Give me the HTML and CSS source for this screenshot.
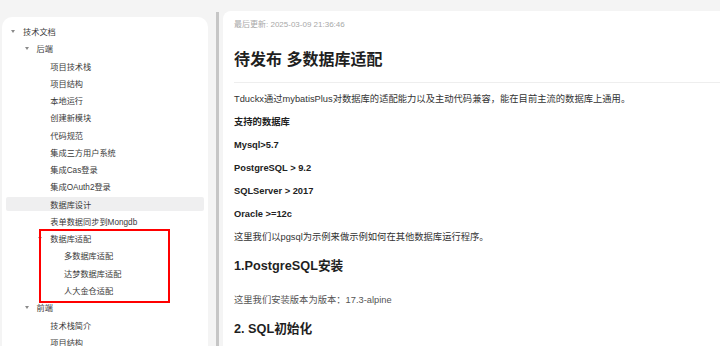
FILE: index.html
```html
<!DOCTYPE html>
<html lang="zh-CN">
<head>
    <meta charset="UTF-8">
    <meta name="viewport" content="width=device-width, initial-scale=1.0">
    <title>待发布 多数据库适配 - 技术文档</title>
    <link rel="stylesheet" href="styles.css">
</head>
<body>
    <aside class="sidebar">
        <ul class="tree">
            <li class="node depth-0"><span class="caret"></span>技术文档</li>
            <li class="node depth-1"><span class="caret"></span>后端</li>
            <li class="node depth-2"><span class="spacer"></span>项目技术栈</li>
            <li class="node depth-2"><span class="spacer"></span>项目结构</li>
            <li class="node depth-2"><span class="spacer"></span>本地运行</li>
            <li class="node depth-2"><span class="spacer"></span>创建新模块</li>
            <li class="node depth-2"><span class="spacer"></span>代码规范</li>
            <li class="node depth-2"><span class="spacer"></span>集成三方用户系统</li>
            <li class="node depth-2"><span class="spacer"></span>集成Cas登录</li>
            <li class="node depth-2"><span class="spacer"></span>集成OAuth2登录</li>
            <li class="node depth-2 active"><span class="spacer"></span>数据库设计</li>
            <li class="node depth-2"><span class="spacer"></span>表单数据同步到Mongdb</li>
            <li class="node depth-2"><span class="caret"></span>数据库适配</li>
            <li class="node depth-3"><span class="spacer"></span>多数据库适配</li>
            <li class="node depth-3"><span class="spacer"></span>达梦数据库适配</li>
            <li class="node depth-3"><span class="spacer"></span>人大金仓适配</li>
            <li class="node depth-1"><span class="caret"></span>前端</li>
            <li class="node depth-2"><span class="spacer"></span>技术栈简介</li>
            <li class="node depth-2"><span class="spacer"></span>项目结构</li>
        </ul>
        <!-- annotation box round the adapter pages -->
        <div class="mark"></div>
    </aside>

    <div class="scroll-bar"></div>

    <main class="doc">
        <div class="meta">最后更新: 2025-03-09 21:36:46</div>
        <h1>待发布 多数据库适配</h1>
        <p>Tduckx通过mybatisPlus对数据库的适配能力以及主动代码兼容，能在目前主流的数据库上通用。</p>
        <p class="strong">支持的数据库</p>
        <p class="strong">Mysql&gt;5.7</p>
        <p class="strong">PostgreSQL &gt; 9.2</p>
        <p class="strong">SQLServer &gt; 2017</p>
        <p class="strong">Oracle &gt;=12c</p>
        <p>这里我们以pgsql为示例来做示例如何在其他数据库运行程序。</p>
        <h2>1.PostgreSQL安装</h2>
        <p class="note">这里我们安装版本为版本：17.3-alpine</p>
        <h2>2. SQL初始化</h2>
    </main>
</body>
</html>
```

FILE: styles.css
```css
* {
    margin: 0;
    padding: 0;
    box-sizing: border-box;
}

body {
    font-family: "Liberation Sans", "Noto Sans CJK SC", sans-serif;
    background-color: #f4f4f4;
    color: #333;
    display: flex;
    align-items: flex-start;
    height: 346px;
    overflow: hidden;
}

/* left tree */
.sidebar {
    position: relative;
    width: 206px;
    margin: 17px 0 0 2px;
    padding: 7px 4px 40px;
    background: #fff;
    border-radius: 10px;
}

.tree {
    list-style: none;
}

.node {
    display: flex;
    align-items: center;
    height: 14px;
    margin-bottom: 3.28px;
    font-size: 8.2px;
    color: #3a3a3a;
    white-space: nowrap;
    border-radius: 2px;
}

.node.active {
    background-color: #efeff0;
}

.depth-0 { padding-left: 2px; }
.depth-1 { padding-left: 15.6px; }
.depth-2 { padding-left: 29.3px; }
.depth-3 { padding-left: 43px; }

.caret,
.spacer {
    width: 10px;
    height: 10px;
    margin-right: 5px;
    flex-shrink: 0;
}

.caret {
    display: flex;
    align-items: center;
    justify-content: center;
}

.caret::before {
    content: '';
    border-left: 2.5px solid transparent;
    border-right: 2.5px solid transparent;
    border-top: 3px solid #8a8a8a;
}

.mark {
    position: absolute;
    left: 37px;
    top: 212px;
    width: 131px;
    height: 74px;
    border: 2px solid #ff0000;
}

.scroll-bar {
    width: 3px;
    height: 340px;
    margin: 12px 0 0 8px;
    background-color: #c6c6c6;
}

/* document panel */
.doc {
    flex: 1;
    height: 340px;
    margin: 11px 0 0 4px;
    padding: 8px 0 0 11px;
    background: #fff;
    border-top-left-radius: 8px;
}

.meta {
    font-size: 8px;
    line-height: 12px;
    color: #a8a8a8;
}

.doc h1 {
    margin-top: 18px;
    padding-bottom: 11px;
    font-size: 16px;
    line-height: 22px;
    font-weight: 700;
    color: #1f1f1f;
    border-bottom: 1px solid #eeeeee;
}

.doc p {
    font-size: 9.3px;
    line-height: 14px;
    margin-bottom: 9px;
    white-space: nowrap;
}

.doc h1 + p {
    margin-top: 9px;
}

.doc p.strong {
    font-weight: 700;
    color: #222;
}

.doc p.note {
    color: #555;
}

.doc h2 {
    margin: 13px 0 18px;
    font-size: 12.7px;
    line-height: 18px;
    font-weight: 700;
    color: #1f1f1f;
}
```
